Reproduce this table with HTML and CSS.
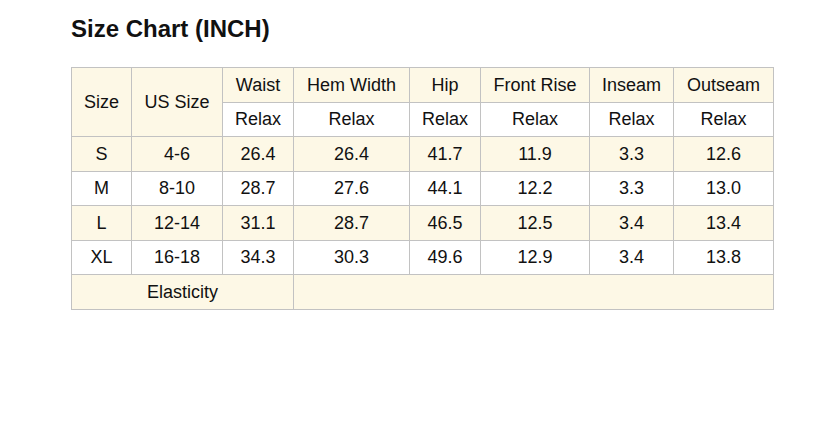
FILE: index.html
```html
<!DOCTYPE html>
<html>
<head>
<meta charset="utf-8">
<link rel="stylesheet" href="styles.css">
</head>
<body>
<div class="page">
  <h2 class="title">Size Chart (INCH)</h2>
  <table class="chart">
    <colgroup>
      <col class="c1"><col class="c2"><col class="c3"><col class="c4"><col class="c5"><col class="c6"><col class="c7"><col class="c8">
    </colgroup>
    <tr class="cream">
      <td rowspan="2">Size</td><td rowspan="2">US Size</td><td>Waist</td><td>Hem Width</td><td>Hip</td><td>Front Rise</td><td>Inseam</td><td>Outseam</td>
    </tr>
    <tr class="white">
      <td>Relax</td><td>Relax</td><td>Relax</td><td>Relax</td><td>Relax</td><td>Relax</td>
    </tr>
    <tr class="cream"><td>S</td><td>4-6</td><td>26.4</td><td>26.4</td><td>41.7</td><td>11.9</td><td>3.3</td><td>12.6</td></tr>
    <tr class="white"><td>M</td><td>8-10</td><td>28.7</td><td>27.6</td><td>44.1</td><td>12.2</td><td>3.3</td><td>13.0</td></tr>
    <tr class="cream"><td>L</td><td>12-14</td><td>31.1</td><td>28.7</td><td>46.5</td><td>12.5</td><td>3.4</td><td>13.4</td></tr>
    <tr class="white"><td>XL</td><td>16-18</td><td>34.3</td><td>30.3</td><td>49.6</td><td>12.9</td><td>3.4</td><td>13.8</td></tr>
    <tr class="cream"><td colspan="3">Elasticity</td><td colspan="5"></td></tr>
  </table>
</div>
</body>
</html>
```
FILE: styles.css
```css
html, body {
  margin: 0;
  padding: 0;
  background: #fff;
}
.page {
  padding: 15px 0 0 71px;
  font-family: "Liberation Sans", Arial, sans-serif;
  color: #111;
}
.title {
  margin: 0 0 24px 0;
  font-size: 24px;
  font-weight: bold;
  line-height: 28px;
  color: #111;
}
.chart {
  border-collapse: collapse;
  table-layout: fixed;
  width: 702px;
  font-size: 18px;
}
.c1 { width: 60px; }
.c2 { width: 91px; }
.c3 { width: 71px; }
.c4 { width: 116px; }
.c5 { width: 71px; }
.c6 { width: 109px; }
.c7 { width: 84px; }
.c8 { width: 100px; }
.chart td {
  border: 1px solid #c2c2c2;
  text-align: center;
  vertical-align: middle;
  padding: 0;
  height: 33.5px;
  line-height: 20px;
  color: #111;
}
.cream td { background: #fdf8e6; }
.white td { background: #fff; }
```
